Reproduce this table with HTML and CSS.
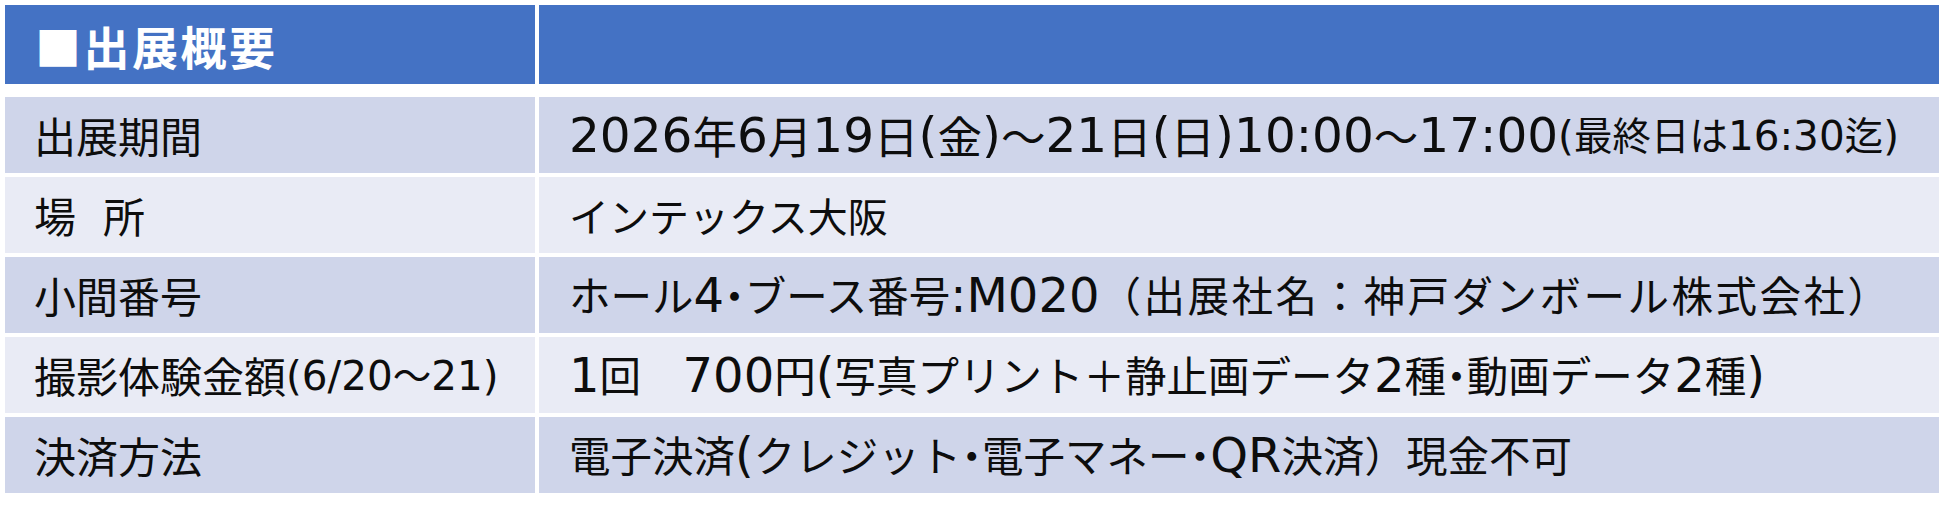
FILE: index.html
```html
<!DOCTYPE html>
<html lang="ja">
<head>
<meta charset="utf-8">
<title>出展概要</title>
<link rel="stylesheet" href="styles.css">
</head>
<body>
<div class="table">
  <div class="row head">
    <div class="cell label">■出展概要</div>
    <div class="cell value"></div>
  </div>
  <div class="row dark">
    <div class="cell label">出展期間</div>
    <div class="cell value big"><span class="en">2026</span>年<span class="en">6</span>月<span class="en">19</span>日<span class="en">(</span>金<span class="en">)</span>～<span class="en">21</span>日<span class="en">(</span>日<span class="en">)10:00</span>～<span class="en">17:00</span><span class="small"><span class="en">(</span>最終日は<span class="en">16:30</span>迄<span class="en">)</span></span></div>
  </div>
  <div class="row light">
    <div class="cell label">場<span class="narrow">　</span>所</div>
    <div class="cell value">インテックス大阪</div>
  </div>
  <div class="row dark">
    <div class="cell label">小間番号</div>
    <div class="cell value mid">ホール<span class="en">4</span><span class="dot">・</span>ブース番号<span class="en">:M020</span><span class="wide">（出展社名：神戸ダンボール株式会社）</span></div>
  </div>
  <div class="row light">
    <div class="cell label">撮影体験金額<span class="small"><span class="en">(6/20</span>～<span class="en">21)</span></span></div>
    <div class="cell value mid"><span class="en">1</span>回　<span class="en">700</span>円<span class="en">(</span>写真プリント＋静止画データ<span class="en">2</span>種<span class="dot">・</span>動画データ<span class="en">2</span>種<span class="en">)</span></div>
  </div>
  <div class="row dark">
    <div class="cell label">決済方法</div>
    <div class="cell value mid">電子決済<span class="en">(</span>クレジット<span class="dot">・</span>電子マネー<span class="dot">・</span><span class="en">QR</span>決済）現金不可</div>
  </div>
</div>
</body>
</html>
```

FILE: styles.css
```css
html, body {
  margin: 0;
  padding: 0;
  background: #ffffff;
}
body {
  padding: 5px;
  font-family: "Noto Sans CJK JP", "Noto Sans", sans-serif;
  color: #0d0d0d;
}
.table {
  display: flex;
  flex-direction: column;
  gap: 4px;
  width: 1934px;
}
.row {
  display: grid;
  grid-template-columns: 530px 1400px;
  column-gap: 4px;
  height: 76px;
}
.row.head {
  height: 79px;
  margin-bottom: 9px;
}
.cell {
  display: flex;
  align-items: center;
  white-space: nowrap;
  font-size: 40px;
  line-height: 1;
}
.label {
  padding-left: 29px;
  font-size: 42px;
}
.value {
  padding-left: 30px;
}
.value.big {
  font-size: 44.5px;
}
.value.big .en {
  font-size: 48.5px;
}
.value.mid {
  font-size: 41.5px;
}
.en {
  font-family: "DejaVu Sans", "Noto Sans", sans-serif;
  font-size: 48px;
}
.small {
  font-size: 38.5px;
}
.small .en,
.value.big .small .en {
  font-size: 40.5px;
}
.dot {
  font-feature-settings: "palt";
}
.wide {
  letter-spacing: 2.5px;
}
.narrow {
  letter-spacing: -15px;
}
.head .cell {
  background: #4472c4;
  color: #ffffff;
  font-weight: 700;
  font-size: 46px;
}
.head .label {
  padding-left: 30px;
  letter-spacing: 2.5px;
}
.dark .cell {
  background: #cfd5ea;
}
.light .cell {
  background: #e9ebf5;
}
```
